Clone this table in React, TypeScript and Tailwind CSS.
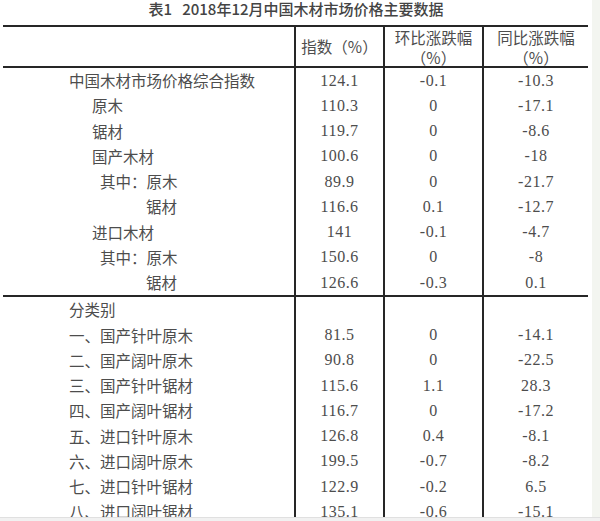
type Row = [string, number, string, string, string];

const main: Row[] = [
  ["中国木材市场价格综合指数", 0, "124.1", "-0.1", "-10.3"],
  ["原木", 1, "110.3", "0", "-17.1"],
  ["锯材", 1, "119.7", "0", "-8.6"],
  ["国产木材", 1, "100.6", "0", "-18"],
  ["其中：原木", 2, "89.9", "0", "-21.7"],
  ["锯材", 3, "116.6", "0.1", "-12.7"],
  ["进口木材", 1, "141", "-0.1", "-4.7"],
  ["其中：原木", 2, "150.6", "0", "-8"],
  ["锯材", 3, "126.6", "-0.3", "0.1"],
];

const byKind: Row[] = [
  ["分类别", 0, "", "", ""],
  ["一、国产针叶原木", 0, "81.5", "0", "-14.1"],
  ["二、国产阔叶原木", 0, "90.8", "0", "-22.5"],
  ["三、国产针叶锯材", 0, "115.6", "1.1", "28.3"],
  ["四、国产阔叶锯材", 0, "116.7", "0", "-17.2"],
  ["五、进口针叶原木", 0, "126.8", "0.4", "-8.1"],
  ["六、进口阔叶原木", 0, "199.5", "-0.7", "-8.2"],
  ["七、进口针叶锯材", 0, "122.9", "-0.2", "6.5"],
  ["八、进口阔叶锯材", 0, "135.1", "-0.6", "-15.1"],
];

const indent = ["pl-[66px]", "pl-[89px]", "pl-[97px]", "pl-[143px]"];

const cjk = "font-['Noto_Sans_CJK_SC',sans-serif]";
const num = "font-['Liberation_Serif',serif] text-[16px] tracking-[0.5px]";

function DataRow({ row }: { row: Row }) {
  const [label, level, a, b, c] = row;
  return (
    <div className="flex h-[25.25px] items-center">
      <div className={`w-[291px] h-full flex items-center ${indent[level]} ${cjk} text-[15.5px]`}>
        {label}
      </div>
      <div className={`w-[89px] h-full flex items-center justify-center border-l-2 border-[#262626] ${num}`}>
        {a}
      </div>
      <div className={`w-[99px] h-full flex items-center justify-center border-l-2 border-[#262626] ${num}`}>
        {b}
      </div>
      <div className={`w-[106px] h-full flex items-center justify-center border-l-2 border-[#262626] ${num}`}>
        {c}
      </div>
    </div>
  );
}

export default function App() {
  return (
    <div className="w-[600px] h-[521px] flex flex-col overflow-hidden bg-white text-[#4d4d4d]">
      <div className="flex h-[517px]">
        <div className="w-[592px] h-full overflow-hidden">
          {/* TITLE */}
          <div className={`h-[25px] pt-[1px] text-center text-[15px] leading-[15px] font-medium text-[#444] ${cjk}`}>
            表1&nbsp;&nbsp;&nbsp;2018年12月中国木材市场价格主要数据
          </div>

          {/* TABLE */}
          <div className="ml-[3px] w-[585px] border-t-2 border-[#262626]">
            {/* HEADER */}
            <div className={`flex h-[41px] border-b-2 border-[#262626] ${cjk} text-[15.5px]`}>
              <div className="w-[291px]" />
              <div className="w-[89px] flex items-center justify-center border-l-2 border-[#262626]">
                指数（%）
              </div>
              <div className="w-[99px] flex flex-col items-center justify-center leading-[20px] border-l-2 border-[#262626]">
                <span>环比涨跌幅</span>
                <span>（%）</span>
              </div>
              <div className="w-[106px] flex flex-col items-center justify-center leading-[20px] border-l-2 border-[#262626]">
                <span>同比涨跌幅</span>
                <span>（%）</span>
              </div>
            </div>

            {/* MAIN INDEX */}
            <div className="border-b-2 border-[#262626]">
              {main.map((r, i) => (
                <DataRow key={i} row={r} />
              ))}
            </div>

            {/* BY KIND */}
            <div>
              {byKind.map((r, i) => (
                <DataRow key={i} row={r} />
              ))}
            </div>
          </div>
        </div>
        <div className="flex-1 bg-[#f3f5f0]" />
      </div>
      <div className="h-[4px] bg-[#f1f1f1] border-t border-[#e0e0e0]" />
    </div>
  );
}
